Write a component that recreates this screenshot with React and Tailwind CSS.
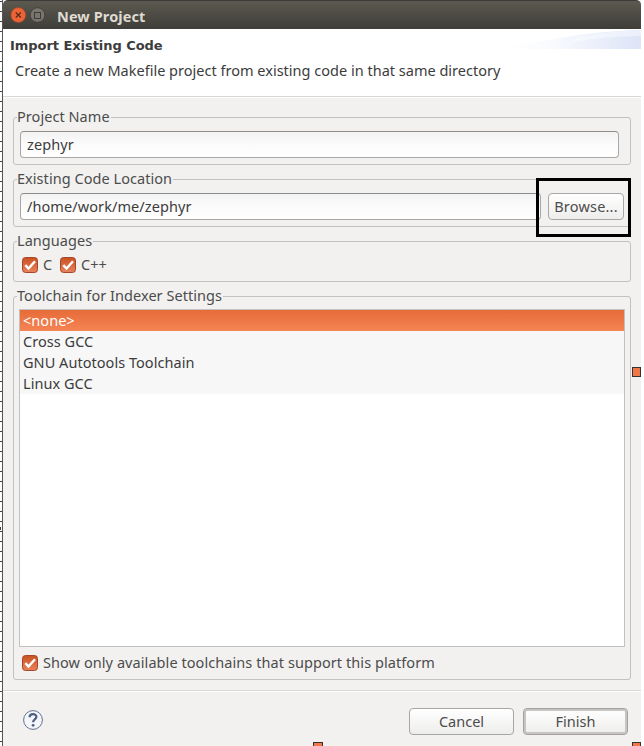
const noto = "font-['Noto_Sans',sans-serif]";

function Check() {
  return (
    <svg className="block size-4 shrink-0" viewBox="0 0 16 16">
      <defs>
        <linearGradient id="chk" x1="0" y1="0" x2="0" y2="1">
          <stop offset="0" stopColor="#c9501f" />
          <stop offset="1" stopColor="#e8835e" />
        </linearGradient>
      </defs>
      <rect x="0.5" y="0.5" width="15" height="15" rx="3" fill="url(#chk)" stroke="#a4472a" />
      <path d="M3.3 8.2 6.5 11.5 13 4.2" fill="none" stroke="#fff" strokeWidth="2.4" />
    </svg>
  );
}

function Group({ title, className, children }) {
  return (
    <fieldset className={`rounded-[3px] border border-[#c3c1bf] ${className}`}>
      <legend className="ml-[3px] h-[19px] pr-px text-[14.5px] leading-[17px] tracking-[0.05px] whitespace-nowrap">{title}</legend>
      {children}
    </fieldset>
  );
}

function Field({ value, className }) {
  return (
    <div className={`flex h-[27px] items-center rounded-[4px] border border-[#a9a7a5] border-t-[#8e8c8a] bg-linear-to-b from-[#f3f3f3] via-[#fbfbfb] to-white pl-1.5 text-[14.5px] tracking-[0.08px] text-[#3c3c3c] ${className}`}>
      <span>{value}</span>
    </div>
  );
}

const button = "flex h-[27px] items-center justify-center rounded-[4px] border bg-linear-to-b from-white to-[#ededec] text-[14.5px]";

export default function App() {
  return (
    <div className={`relative flex h-[746px] w-[644px] overflow-hidden bg-white text-[#4c4c4c] ${noto}`}>
      <div className="w-[3px] shrink-0 border-r border-[#555] bg-[repeating-linear-gradient(to_bottom,#fff_0,#fff_1px,#444_1px,#444_2px,#fff_2px,#fff_10px)]" />
      <div className="flex w-[638px] flex-col bg-[#f2f1f0]">
        <header className="flex h-[29px] items-center rounded-t-[5px] border-t border-[#3c3b37] bg-linear-to-b from-[#5c5a50] to-[#3e3d38] pl-[7px]">
          <svg className="size-4" viewBox="0 0 16 16">
            <circle cx="8.3" cy="8" r="7.5" fill="#ec6336" stroke="#9e4528" strokeWidth=".7" />
            <path d="m5.8 5.5 5 5m0-5-5 5" stroke="#582c1d" strokeWidth="1.2" />
          </svg>
          <svg className="ml-1 size-4" viewBox="0 0 16 16">
            <circle cx="7.5" cy="8" r="7.3" fill="#77756c" stroke="#3b3a35" strokeWidth=".8" />
            <rect x="4.5" y="5.5" width="6" height="6" fill="none" stroke="#3c3b37" />
          </svg>
          <h1 className="mt-0.5 ml-[11px] text-[14.5px] leading-5 font-bold tracking-[0.1px] text-[#dfdbd2]">New Project</h1>
        </header>
        <section className="relative h-[68px] border-b border-[#d9d8d7] bg-white">
          <svg className="absolute top-0 right-0 h-5 w-[140px]" viewBox="0 0 140 20">
            <defs>
              <linearGradient id="swoosh"><stop stopColor="#fff" /><stop offset=".35" stopColor="#fafbfe" /><stop offset="1" stopColor="#dde4f7" /></linearGradient>
              <linearGradient id="sheen"><stop stopColor="#f7f9fe" /><stop offset="1" stopColor="#eaeffb" /></linearGradient>
            </defs>
            <path d="M0 20C45 12 75 3 140 1V20Z" fill="url(#swoosh)" />
            <path d="M75 8Q110 2 140 1V7Q105 7 70 13Z" fill="url(#sheen)" />
          </svg>
          <h2 className="pt-[9px] pl-[7px] font-['DejaVu_Sans',sans-serif] text-[13px] leading-4 font-bold tracking-[-0.05px] text-[#3c3c3c]"><span>Import Existing Code</span></h2>
          <p className="mt-1.5 pl-3 text-[14.5px] leading-5 tracking-[0.01px] text-[#3c3c3c]"><span>Create a new Makefile project from existing code in that same directory</span></p>
        </section>
        <main className="flex h-[594px] flex-col border-t border-white px-2.5 pt-2.5">
          <Group title="Project Name" className="h-[57px]">
            <Field value="zephyr" className="mt-1 mr-[11px] ml-1.5" />
          </Group>
          <Group title="Existing Code Location" className="mt-[5px] h-[57px]">
            <div className="mt-1 flex gap-[7px] pr-1.5 pl-1.5">
              <Field value="/home/work/me/zephyr" className="w-[521px]" />
              <button className={`${button} w-[76px] border-[#a9a7a5] tracking-[0.2px]`}>Browse...</button>
            </div>
          </Group>
          <Group title="Languages" className="mt-[5px] h-[50px]">
            <div className="mt-1.5 ml-2 flex h-4 items-center text-[14.5px] leading-4">
              <Check /><span className="-mt-0.5 ml-[5px] w-[17px]">C</span>
              <Check /><span className="-mt-0.5 ml-[5px]">C++</span>
            </div>
          </Group>
          <Group title="Toolchain for Indexer Settings" className="mt-[5px] h-[393px]">
            <ul className="mt-[3px] mr-[5px] ml-[5px] h-[338px] border border-[#c3c1bf] bg-white text-[14.5px] leading-[21px] tracking-[0.04px] text-[#3c3c3c]">
              <li className="h-[21px] bg-linear-to-b from-[#e66c38] to-[#f58454] pl-[3px] text-white"><span>&lt;none&gt;</span></li>
              <li className="h-[21px] bg-[#f7f7f7] pl-[3px]">Cross GCC</li>
              <li className="h-[21px] bg-[#f7f7f7] pl-[3px]">GNU Autotools Toolchain</li>
              <li className="h-[21px] bg-[#f7f7f7] pl-[3px]">Linux GCC</li>
            </ul>
            <div className="mt-2 ml-2 flex h-4 items-center gap-[5px] text-[14.5px] leading-4">
              <Check /><span className="-mt-0.5 tracking-[0.07px]">Show only available toolchains that support this platform</span>
            </div>
          </Group>
        </main>
        <footer className="flex h-[55px] items-start border-t border-white pt-4 pr-[13px] pl-5 shadow-[0_-1px_0_#d9d8d7]">
          <svg className="mt-0.5 size-5" viewBox="0 0 20 20">
            <circle cx="10" cy="10" r="9.4" fill="#f4f6f9" stroke="#63718c" />
            <path d="M6.6 7.2C6.7 3.2 13.4 3.2 13.4 6.8 13.4 9.5 10.1 9.2 10.1 12.3" fill="none" stroke="#4b5f82" strokeWidth="2.2" />
            <circle cx="10.1" cy="15.3" r="1.4" fill="#4b5f82" />
          </svg>
          <button className={`${button} ml-auto w-[105px] border-[#a9a7a5]`}>Cancel</button>
          <button className={`${button} ml-[9px] w-[105px] border-[#a3a1a0] shadow-[inset_0_0_0_2px_#c6c5c4]`}>Finish</button>
        </footer>
      </div>
      <div className="absolute top-[527px] left-0 h-[3px] w-px bg-[#444]" />
      <div className="absolute top-[178px] left-[536px] h-[59px] w-[95px] border-3 border-black" />
      <div className="absolute top-[367px] left-[632px] h-2.5 w-[9px] border border-[#333] bg-[#f07746]" />
      <div className="absolute top-[742px] left-[313px] h-2.5 w-2.5 border border-[#333] bg-[#f07746]" />
      <div className="absolute top-[742px] left-[632px] h-2.5 w-[9px] border border-[#333] bg-[#f07746]" />
    </div>
  );
}
